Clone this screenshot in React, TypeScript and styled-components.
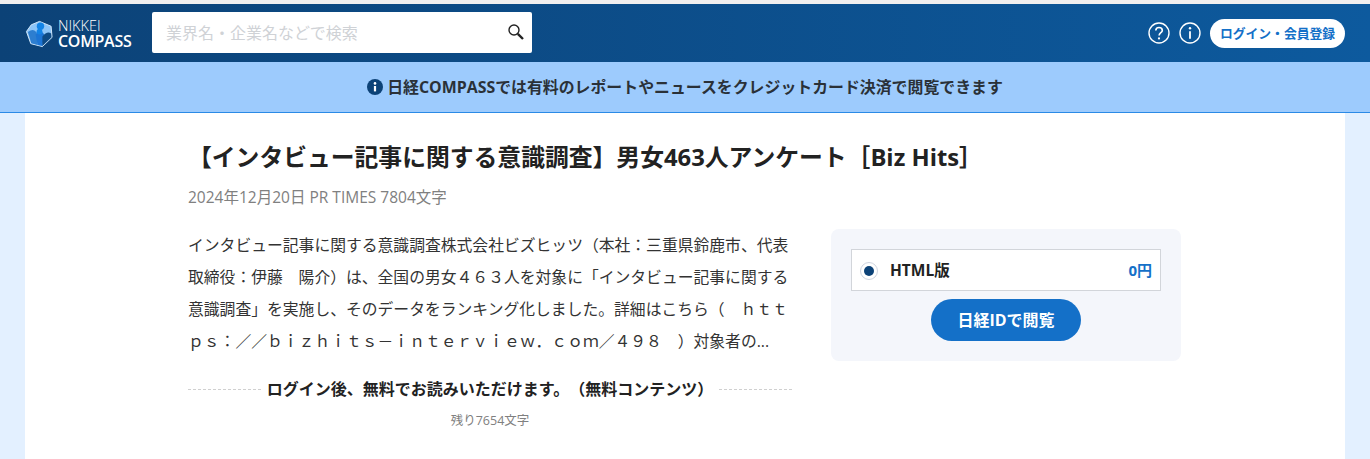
import React from "react";
import styled, { createGlobalStyle } from "styled-components";

const jp = `"Open Sans", "Noto Sans CJK JP", sans-serif`;

const Global = createGlobalStyle`
  html, body { margin: 0; padding: 0; height: 100%; overflow: hidden; background: #e3f0ff; }
  body { font-family: ${jp}; color: #222; text-spacing-trim: space-all; }
`;

const Page = styled.div`
  width: 1370px;
  height: 459px;
  display: flex;
  flex-direction: column;
  border-top: 4px solid #f1efef;
  box-sizing: border-box;
  overflow: hidden;
`;

const Header = styled.header`
  height: 58px;
  flex: none;
  display: flex;
  align-items: center;
  padding: 0 25px;
  background: linear-gradient(90deg, #0c4277 0%, #0d5a9e 100%);
`;

const Logo = styled.div`
  display: flex;
  align-items: center;
  gap: 4px;
  width: 127px;
  height: 32px;
  color: #fff;
`;

const LogoText = styled.div`
  display: flex;
  flex-direction: column;
  font-family: "Open Sans", sans-serif;
`;

const LogoTop = styled.span`
  font-size: 14.5px;
  line-height: 15px;
  font-weight: 300;
`;

const LogoBottom = styled.span`
  font-size: 16px;
  line-height: 16px;
  font-weight: 600;
  letter-spacing: -0.3px;
`;

const Search = styled.div`
  width: 380px;
  height: 41px;
  margin-top: -1px;
  background: #fff;
  border-radius: 2px;
  display: flex;
  align-items: center;
  justify-content: space-between;
  padding: 0 7px 2px 14px;
  box-sizing: border-box;
`;

const Placeholder = styled.span`
  font-size: 16px;
  color: #cfd2d6;
`;

const HeaderRight = styled.div`
  margin-left: auto;
  display: flex;
  align-items: center;
`;

const RoundIcon = styled.svg`
  width: 22px;
  height: 22px;
  margin-right: 9px;
  display: block;
`;

const LoginButton = styled.button`
  width: 135px;
  height: 29px;
  border: none;
  border-radius: 15px;
  background: #fff;
  color: #1470c8;
  font-family: ${jp};
  font-size: 12.8px;
  font-weight: 700;
  padding: 0 0 2px;
`;

const Banner = styled.div`
  height: 50px;
  flex: none;
  box-sizing: border-box;
  background: #9dcbfd;
  display: flex;
  align-items: center;
  justify-content: center;
  gap: 4px;
  padding-bottom: 2px;
  font-size: 15.9px;
  font-weight: 700;
  color: #2a3138;
`;

const Rule = styled.div`
  height: 1px;
  flex: none;
  background: #2b8ae6;
`;

const Sheet = styled.main`
  flex: 1;
  margin: 0 25px;
  background: #fff;
  padding: 0 164px 0 163px;
`;

const Title = styled.h1`
  margin: 25px 0 0;
  font-size: 23.8px;
  line-height: 38px;
  font-weight: 700;
  color: #222;
  white-space: nowrap;
`;

const Meta = styled.div`
  margin-top: 10px;
  font-size: 15.5px;
  line-height: 22px;
  color: #808080;
`;

const Columns = styled.div`
  margin-top: 21px;
  display: flex;
  justify-content: space-between;
  align-items: flex-start;
`;

const Left = styled.div`
  width: 604px;
`;

const Body = styled.p`
  margin: 0;
  font-size: 15.8px;
  line-height: 32px;
  color: #333;
  white-space: nowrap;
`;

const Divider = styled.div`
  margin-top: 20px;
  display: flex;
  align-items: center;
  gap: 6px;
`;

const DashLine = styled.div`
  flex: 1;
  border-top: 1px dashed #d0d0d0;
`;

const DividerText = styled.div`
  font-size: 16px;
  line-height: 24px;
  font-weight: 700;
  color: #222;
`;

const Remain = styled.div`
  margin-top: 11px;
  text-align: center;
  font-size: 12.5px;
  line-height: 18px;
  color: #808080;
`;

const Panel = styled.aside`
  width: 350px;
  height: 132px;
  box-sizing: border-box;
  background: #f4f6fb;
  border-radius: 8px;
  padding: 20px;
  display: flex;
  flex-direction: column;
  align-items: center;
`;

const PlanRow = styled.div`
  width: 310px;
  height: 42px;
  box-sizing: border-box;
  background: #fff;
  border: 1px solid #d2d5da;
  display: flex;
  align-items: center;
  padding: 0 8px 2px 8px;
`;

const Radio = styled.span`
  width: 18px;
  height: 18px;
  margin-top: 3px;
  box-sizing: border-box;
  border: 1px solid #d0d5df;
  border-radius: 50%;
  background: #fff;
  display: flex;
  align-items: center;
  justify-content: center;
  &::after {
    content: "";
    width: 10px;
    height: 10px;
    border-radius: 50%;
    background: #0c4277;
  }
`;

const PlanName = styled.span`
  margin-left: 12px;
  font-size: 15.5px;
  font-weight: 700;
  color: #222;
`;

const PlanPrice = styled.span`
  margin-left: auto;
  font-size: 15px;
  font-weight: 700;
  color: #1470c8;
`;

const ReadButton = styled.button`
  margin-top: 8px;
  width: 150px;
  height: 42px;
  border: none;
  border-radius: 21px;
  background: #1470c8;
  color: #fff;
  font-family: ${jp};
  font-size: 16px;
  font-weight: 700;
  padding: 0 0 2px;
`;

const BannerIcon = styled.svg`
  width: 16px;
  height: 16px;
  margin-top: 2px;
  display: block;
`;

export default function App() {
  return (
    <Page>
      <Global />
      <Header>
        <Logo>
          <svg width="29" height="31" viewBox="0 0 30 30" style={{ flex: "none" }}>
            <path d="M15 2.5 L27 7.5 L28 19 L18 28.5 L6 25.5 L1.5 13 L6.5 6 Z" fill="#8cc4f7" stroke="#d5e9fb" strokeWidth="1" strokeLinejoin="round" />
            <path d="M3 13.5 Q9 9 12 14 L13 27 L6.5 25 Z" fill="#2d7ed0" />
            <path d="M11 16 Q15 9 20 16 L18 28 L13 27 Z" fill="#1c74d4" />
            <path d="M18 18 Q23 12 27 15 L27.4 19 L18 28 Z" fill="#0e4a84" />
            <circle cx="16" cy="7.5" r="3.8" fill="#1283e6" />
            <circle cx="15" cy="13" r="3" fill="#1283e6" />
          </svg>
          <LogoText>
            <LogoTop>NIKKEI</LogoTop>
            <LogoBottom>COMPASS</LogoBottom>
          </LogoText>
        </Logo>
        <Search>
          <Placeholder>業界名・企業名などで検索</Placeholder>
          <svg width="18" height="18" viewBox="0 0 18 18">
            <circle cx="7" cy="7" r="5" fill="none" stroke="#222" strokeWidth="1.4" />
            <path d="M10.8 10.8 L16 16" stroke="#222" strokeWidth="2.4" />
          </svg>
        </Search>
        <HeaderRight>
          <RoundIcon viewBox="0 0 22 22">
            <circle cx="11" cy="11" r="10" fill="none" stroke="#fff" strokeWidth="1.4" />
            <path d="M7.8 8.6 C7.8 6.6 9.2 5.5 11 5.5 C12.9 5.5 14.3 6.7 14.3 8.4 C14.3 10.6 11.1 10.9 11.1 13.6" fill="none" stroke="#fff" strokeWidth="1.6" />
            <circle cx="11" cy="16.4" r="1.1" fill="#fff" />
          </RoundIcon>
          <RoundIcon viewBox="0 0 22 22">
            <circle cx="11" cy="11" r="10" fill="none" stroke="#fff" strokeWidth="1.4" />
            <circle cx="11" cy="6.3" r="1.2" fill="#fff" />
            <path d="M11 9.3 V16.8" stroke="#fff" strokeWidth="1.8" />
          </RoundIcon>
          <LoginButton>ログイン・会員登録</LoginButton>
        </HeaderRight>
      </Header>
      <Banner>
        <BannerIcon viewBox="0 0 16 16">
          <circle cx="8" cy="8" r="8" fill="#0c4277" />
          <circle cx="8" cy="4.4" r="1.3" fill="#fff" />
          <path d="M8 7 V12.4" stroke="#fff" strokeWidth="2.2" />
        </BannerIcon>
        日経COMPASSでは有料のレポートやニュースをクレジットカード決済で閲覧できます
      </Banner>
      <Rule />
      <Sheet>
        <Title>【インタビュー記事に関する意識調査】男女463人アンケート［Biz Hits］</Title>
        <Meta>2024年12月20日 PR TIMES 7804文字</Meta>
        <Columns>
          <Left>
            <Body>
              インタビュー記事に関する意識調査株式会社ビズヒッツ（本社：三重県鈴鹿市、代表
              <br />
              取締役：伊藤　陽介）は、全国の男女４６３人を対象に「インタビュー記事に関する
              <br />
              意識調査」を実施し、そのデータをランキング化しました。詳細はこちら（　ｈｔｔ
              <br />
              ｐｓ：／／ｂｉｚｈｉｔｓ－ｉｎｔｅｒｖｉｅｗ．ｃｏｍ／４９８　）対象者の...
            </Body>
            <Divider>
              <DashLine />
              <DividerText>ログイン後、無料でお読みいただけます。（無料コンテンツ）</DividerText>
              <DashLine />
            </Divider>
            <Remain>残り7654文字</Remain>
          </Left>
          <Panel>
            <PlanRow>
              <Radio />
              <PlanName>HTML版</PlanName>
              <PlanPrice>0円</PlanPrice>
            </PlanRow>
            <ReadButton>日経IDで閲覧</ReadButton>
          </Panel>
        </Columns>
      </Sheet>
    </Page>
  );
}
